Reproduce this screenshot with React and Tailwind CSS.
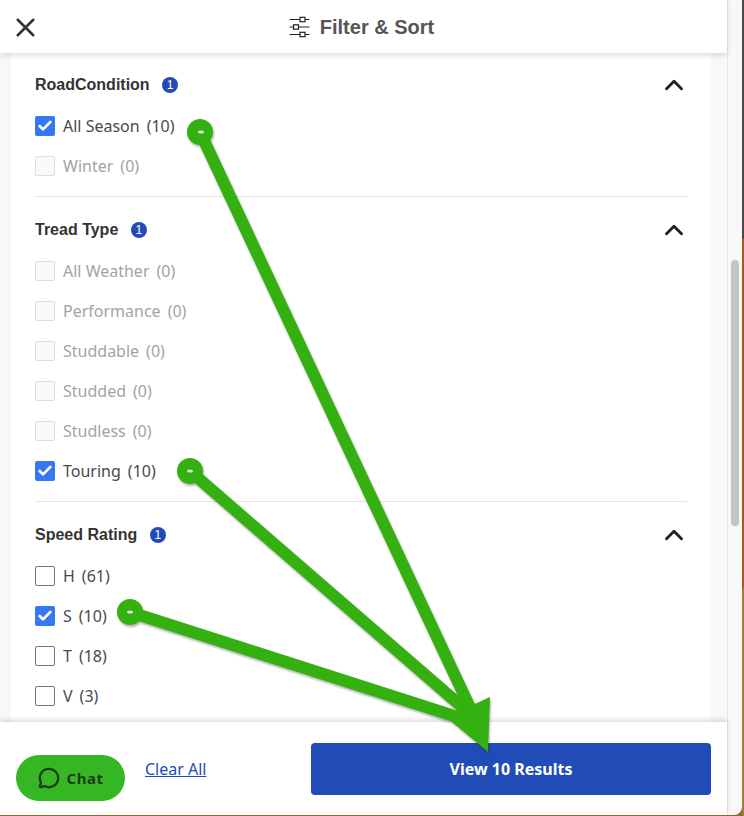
import { Check, ChevronUp, X, MessageCircle } from 'lucide-react'

const sections = [
  {
    title: 'RoadCondition',
    wrap: 'border-b border-[#e6e6e6] pt-5 pb-[10px]',
    head: 'mb-[9px] flex h-6 items-center',
    items: [
      { label: 'All Season', count: 10, checked: true },
      { label: 'Winter', count: 0, disabled: true },
    ],
  },
  {
    title: 'Tread Type',
    wrap: 'border-b border-[#e6e6e6] pt-[21px] pb-[10px]',
    head: 'mb-[9px] flex h-6 items-center',
    items: [
      { label: 'All Weather', count: 0, disabled: true },
      { label: 'Performance', count: 0, disabled: true },
      { label: 'Studdable', count: 0, disabled: true },
      { label: 'Studded', count: 0, disabled: true },
      { label: 'Studless', count: 0, disabled: true },
      { label: 'Touring', count: 10, checked: true },
    ],
  },
  {
    title: 'Speed Rating',
    wrap: 'pt-[21px]',
    head: 'mb-[9px] flex h-6 items-center',
    items: [
      { label: 'H', count: 61 },
      { label: 'S', count: 10, checked: true },
      { label: 'T', count: 18 },
      { label: 'V', count: 3 },
    ],
  },
]

function FilterRow({ label, count, checked, disabled }) {
  return (
    <div className={disabled ? 'flex h-10 items-center font-["Noto_Sans"] text-base leading-6 text-[#a3a3a3]' : 'flex h-10 items-center font-["Noto_Sans"] text-base leading-6 text-[#4a4a4a]'}>
      {checked ? (
        <span className="flex h-5 w-5 items-center justify-center rounded-[2px] bg-[#3478f6]">
          <Check size={16} strokeWidth={4} className="text-white" />
        </span>
      ) : (
        <span className={disabled ? 'h-5 w-5 rounded-[2px] border border-[#dedede] bg-[#fafafa]' : 'h-5 w-5 rounded-[2px] border border-[#767676] bg-white'} />
      )}
      <span className="ml-2">{label}</span>
      <span className="ml-[7px]">({count})</span>
    </div>
  )
}

function Section({ title, wrap, head, items }) {
  return (
    <div className={wrap}>
      <div className={head}>
        <span className="font-['Liberation_Sans'] text-base font-bold text-[#333]">{title}</span>
        <span className="ml-[12.5px] flex h-4 w-4 items-center justify-center rounded-full bg-[#214cb8] font-['Liberation_Sans'] text-xs text-white">1</span>
        <ChevronUp size={30} strokeWidth={2.3} className="mr-[-2px] ml-auto text-[#222]" />
      </div>
      {items.map((item) => (
        <FilterRow key={item.label} {...item} />
      ))}
    </div>
  )
}

function SlidersIcon() {
  return (
    <svg width="21" height="22" viewBox="0 0 21 22" fill="none" stroke="#222" strokeWidth="1.2">
      <path d="M0.5 3.5h10.5M16 3.5h4.5M0.5 11h4M10 11h10.5M0.5 18.5h10.5M16 18.5h4.5" />
      <rect x="11" y="1.3" width="5" height="4.4" />
      <rect x="4.5" y="8.8" width="5" height="4.4" />
      <rect x="11" y="16.3" width="5" height="4.4" />
    </svg>
  )
}

// annotation arrows drawn over the screenshot
function Arrows() {
  return (
    <svg className="pointer-events-none absolute inset-0 z-20 drop-shadow-[1px_2px_1px_rgba(0,0,0,0.3)]" width="744" height="816" viewBox="0 0 744 816" fill="#34b011">
      <polygon points="205.4,129.5 194.6,134.5 466.6,714.5 477.4,709.5" />
      <polygon points="193.9,466.5 186.1,475.5 464,716.5 472,707.5" />
      <polygon points="131.8,606.3 128.2,617.7 468.2,726.7 471.8,715.3" />
      <circle cx="200" cy="132" r="13" />
      <circle cx="190" cy="471" r="13" />
      <circle cx="130" cy="612" r="13" />
      <polygon points="490,697 488,752 446,717" />
      <g fill="#d5e8cc">
        <ellipse cx="201" cy="132" rx="3" ry="1.5" />
        <ellipse cx="190" cy="471" rx="3" ry="1.5" />
        <ellipse cx="130" cy="612" rx="3" ry="1.5" />
      </g>
    </svg>
  )
}

export default function App() {
  return (
    <div className="relative flex h-[816px] w-[744px] overflow-hidden bg-[#8a6a2c]">
      <div className="flex h-[815px] w-[742px] overflow-hidden rounded-br-[8px] bg-[#f8f8f8]">
        <div className="flex w-[727px] flex-col">
          <header className="relative z-10 flex h-[53px] shrink-0 items-center justify-center bg-white pr-1 shadow-[0_2px_6px_rgba(0,0,0,0.15)]">
            <X size={31} strokeWidth={2} className="absolute left-[10px] top-[12px] text-[#333]" />
            <SlidersIcon />
            <span className="ml-[10px] font-['Liberation_Sans'] text-xl font-bold text-[#555]">Filter &amp; Sort</span>
          </header>
          <div className="min-h-0 flex-1 overflow-hidden pr-4 pl-[11px]">
            <div className="h-full bg-white px-6">
              {sections.map((section) => (
                <Section key={section.title} {...section} />
              ))}
            </div>
          </div>
          <footer className="relative z-10 flex h-[93px] shrink-0 bg-white shadow-[0_-2px_5px_rgba(0,0,0,0.15)]">
            <button type="button" className="mt-[33px] ml-4 flex h-[46px] w-[109px] items-center justify-center rounded-full bg-[#34b722] font-['Noto_Sans'] text-[15px] font-bold tracking-[0.5px] text-[#1f3a1a]">
              <MessageCircle size={22} strokeWidth={2.5} className="mr-[7px]" />
              Chat
            </button>
            <a href="#" className="mt-[35px] ml-5 font-['Noto_Sans'] text-base leading-6 text-[#214cb8] underline">Clear All</a>
            <button type="button" className="mt-[21px] mr-4 ml-auto h-[52px] w-[400px] rounded-[4px] bg-[#214cb8] font-['Noto_Sans'] text-base font-bold text-white">View 10 Results</button>
          </footer>
        </div>
        <div className="flex w-[15px] flex-col border-l border-[#e8e8e8] pt-[260px] pl-[3px]">
          <div className="h-[266px] w-2 rounded-full bg-[#c4c4c4]" />
        </div>
      </div>
      <div className="flex w-[2px] flex-col">
        <div className="h-[239px] bg-[#4a4a46]" />
        <div className="h-[349px] bg-[#a8572a]" />
        <div className="flex-1 bg-[#9c7f3e]" />
      </div>
      <Arrows />
    </div>
  )
}
